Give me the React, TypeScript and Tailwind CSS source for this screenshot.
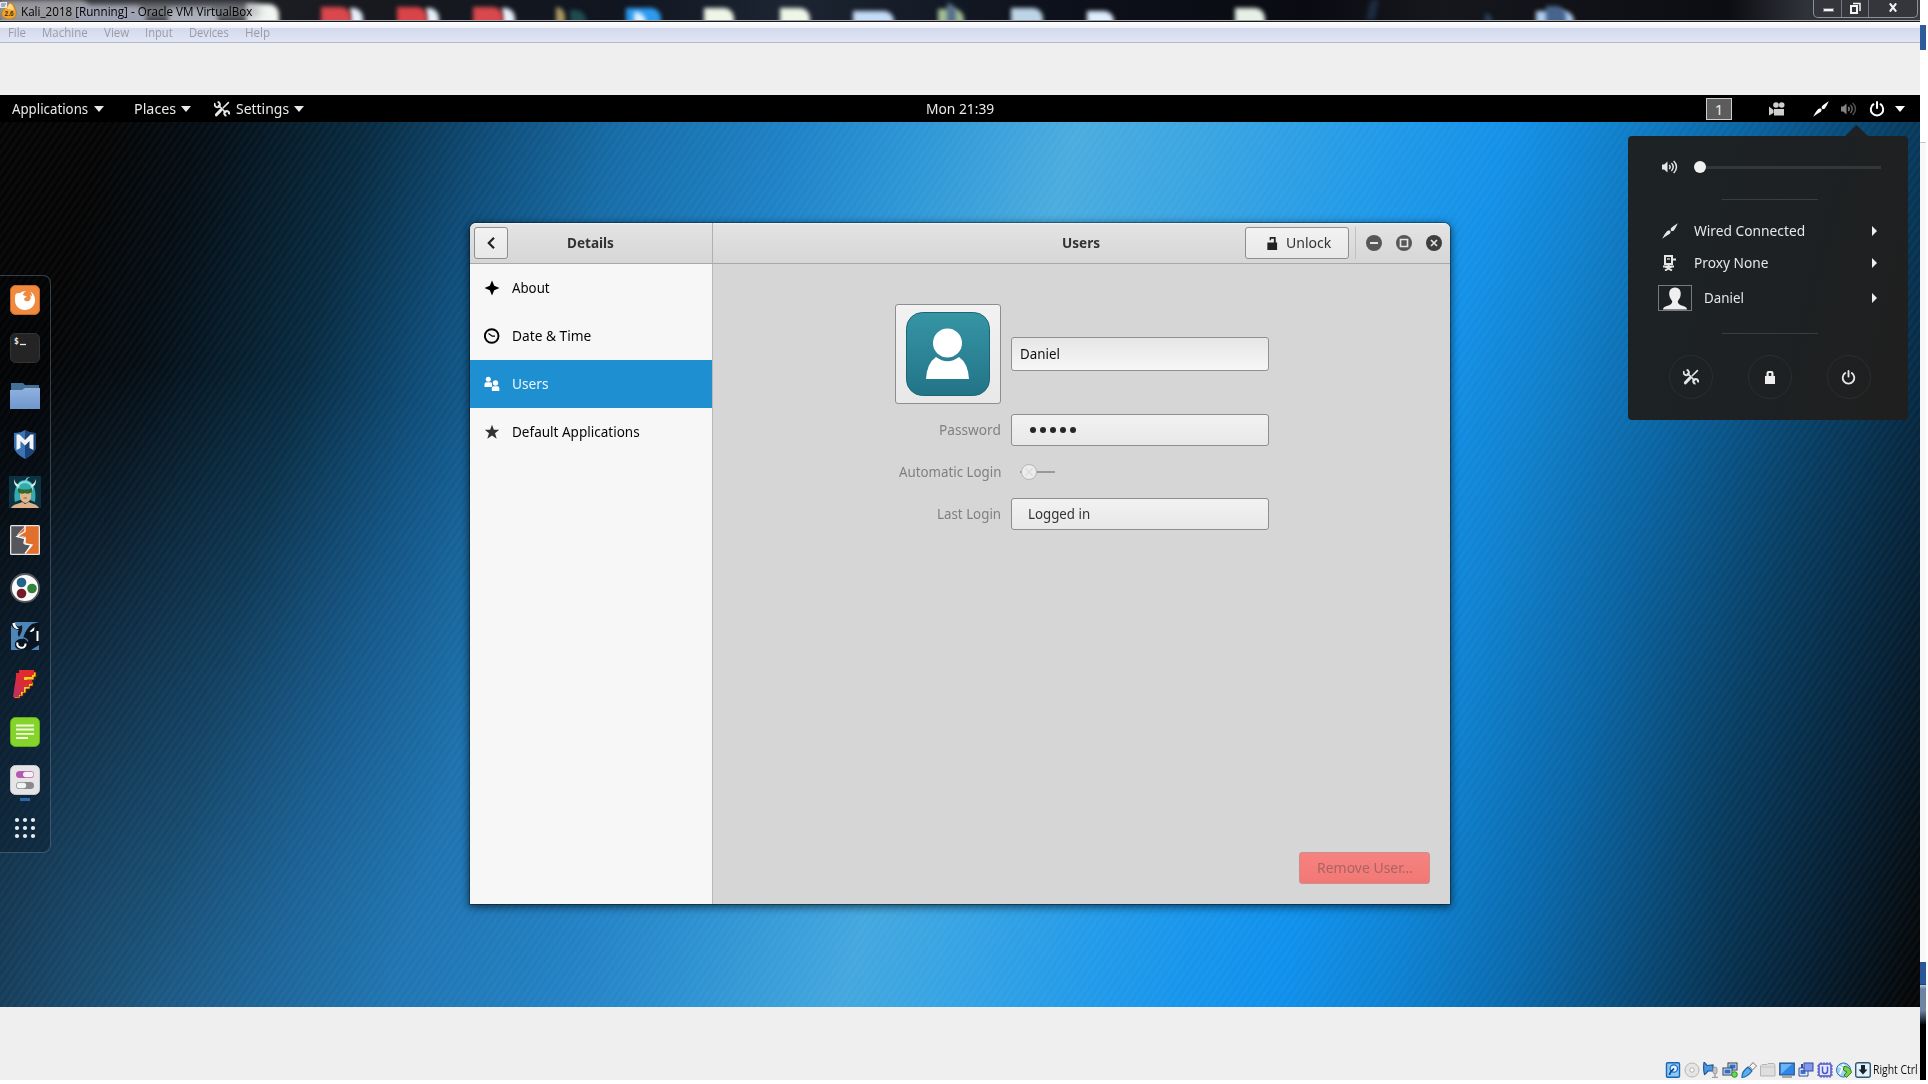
import { useLayoutEffect, useRef, type ReactNode } from "react";

/* A single line of text, condensed or widened to a given pixel width. */
function Fit({ w, className = "", children }: { w: number; className?: string; children: ReactNode }) {
  const ref = useRef<HTMLSpanElement>(null);
  useLayoutEffect(() => {
    const el = ref.current;
    if (!el) return;
    el.style.transform = `scaleX(${w / el.offsetWidth})`;
  }, [w]);
  return (
    <span className="-mt-[2px] block shrink-0" style={{ width: w }}>
      <span ref={ref} className={`inline-block origin-left whitespace-nowrap ${className}`}>
        {children}
      </span>
    </span>
  );
}

function Tools({ className }: { className: string }) {
  return (
    <svg viewBox="0 0 16 16" className={className} fill="none" stroke="currentColor">
      <path d="M4.2 4.2 12 12" strokeWidth="1.7" />
      <path d="M1.1 2.3a2.6 2.6 0 0 0 4.3 2.9A2.6 2.6 0 0 0 3.6 1" strokeWidth="1.8" />
      <path d="M14.9 13.3a2.5 2.5 0 0 0-3.6-3 2.5 2.5 0 0 0 1.2 4.5" strokeWidth="2" />
      <path d="m14.4 1.6-5.2 5.2" strokeWidth="1.6" strokeLinecap="round" />
      <path d="m8.2 7.8-.8.8" strokeWidth="1.3" />
      <path d="M6.6 9.4 2.4 13.8" strokeWidth="3" strokeLinecap="round" />
    </svg>
  );
}

function Plug({ className }: { className: string }) {
  return (
    <svg viewBox="0 0 16 16" className={className} fill="currentColor">
      <path d="M15.8.2 11.6 2.9 8.9 5.2 8.7 7.3l1 .9 2-.4 2-3.2z" />
      <path d="M7.3 7.3 5.2 8 2.8 11 .1 15.8l4.4-3 3.3-2 1-2z" />
    </svg>
  );
}

function Speaker({ className, dim = false }: { className: string; dim?: boolean }) {
  return (
    <svg viewBox="0 0 16 16" className={className} fill="none" stroke="currentColor" strokeWidth="1.5">
      <path d="M0 5.5h2.2L5.5 2.4v11.2L2.2 10.5H0z" fill="currentColor" stroke="none" />
      <path d="M7.3 6c1.2 1.2 1.2 2.8 0 4" />
      <path d="M9.4 4c2.4 2.3 2.4 5.7 0 8" opacity={dim ? 0.75 : 1} />
      <path d="M11.7 2c3.7 3.7 3.7 8.3 0 12" opacity={dim ? 0.6 : 1} />
    </svg>
  );
}

function Power({ className }: { className: string }) {
  return (
    <svg viewBox="0 0 16 16" className={className} fill="none" stroke="currentColor" strokeWidth="2" strokeLinecap="round">
      <path d="M4.5 3.2a6.2 6.2 0 1 0 7 0" />
      <path d="M8 1v6" />
    </svg>
  );
}

function Caret({ className = "" }: { className?: string }) {
  return (
    <svg viewBox="0 0 10 6" className={`h-[6px] w-[10px] shrink-0 ${className}`} fill="currentColor">
      <path d="M0 0h10L5 6z" />
    </svg>
  );
}

const blobs = [
  { x: 0, w: 90, c: "#8b8a90", y: 0 },
  { x: 76, w: 70, c: "#9aa0c0", y: 6 },
  { x: 168, w: 50, c: "#b0b8c8", y: 8 },
  { x: 246, w: 33, c: "#f2f6f2", y: 4 },
  { x: 350, w: 13, c: "#e6effa", y: 8 },
  { x: 321, w: 30, c: "#d8484c", y: 7 },
  { x: 426, w: 13, c: "#e6effa", y: 8 },
  { x: 397, w: 30, c: "#d84448", y: 7 },
  { x: 502, w: 13, c: "#e6effa", y: 8 },
  { x: 473, w: 30, c: "#d8484c", y: 7 },
  { x: 556, w: 9, c: "#a8985e", y: 7 },
  { x: 570, w: 16, c: "#1f4c50", y: 10 },
  { x: 626, w: 35, c: "#2d9cf0", y: 8 },
  { x: 634, w: 12, c: "#dff2ff", y: 12 },
  { x: 704, w: 30, c: "#eef6e8", y: 8 },
  { x: 780, w: 30, c: "#eef6e8", y: 8 },
  { x: 853, w: 41, c: "#c4dcf8", y: 11 },
  { x: 938, w: 26, c: "#a4be94", y: 9 },
  { x: 947, w: 9, c: "#56708c", y: 3 },
  { x: 1011, w: 32, c: "#bcd4e6", y: 8 },
  { x: 1087, w: 27, c: "#deeefc", y: 11 },
  { x: 1235, w: 30, c: "#e6f0e6", y: 8 },
  { x: 1485, w: 7, c: "#28405a", y: 13 },
  { x: 1536, w: 38, c: "#b0cdf2", y: 11 },
  { x: 1546, w: 20, c: "#46648c", y: 6 },
];

function TitleBar() {
  return (
    <div className="relative h-[20px] shrink-0 overflow-hidden bg-[linear-gradient(90deg,#24262b_0,#17191f_20%,#101520_32%,#1c2532_41%,#0d111b_55%,#0a0b12_68%,#15171c_75%,#0c0d12_90%,#30323a_94%,#3a3c42_100%)]">
      {blobs.map((b, i) => (
        <i
          key={i}
          className="absolute h-[28px] rounded-tr-[10px] blur-[2px]"
          style={{ left: b.x, width: b.w, top: b.y, background: b.c }}
        />
      ))}
      <i className="absolute -left-3 top-[3px] h-[16px] w-[272px] rounded-full bg-[#a3a4a8]/70 blur-[5px]" />
      <i className="absolute left-[1368px] top-0 h-[20px] w-[9px] -skew-x-12 bg-[#21364f] opacity-70 blur-[2px]" />
      <div className="relative flex h-[20px] items-center">
        <svg viewBox="0 0 17 18" className="h-[18px] w-[17px] shrink-0">
          <path d="M5 7 10 2c3-1 4 3 6 8 1 6-2 8-7 8-6 0-8-4-7-7z" fill="#f0a52c" stroke="#a56a12" strokeWidth=".6" />
          <path d="M9 3c2-1 4 2 5 6L7 8z" fill="#ffd98a" />
          <rect width="7" height="6" y="1" fill="#e8ecf2" />
          <path d="M1 3h5M1 5h4" stroke="#5c6d8c" />
          <text x="4.6" y="14.5" fontSize="6.5" fontWeight="700" fontFamily="Liberation Sans" fill="#4a2c05">2.6</text>
        </svg>
        <div className="ml-[4px] mt-[6px] font-['Open_Sans'] text-[12.5px] leading-[18px] text-black">
          <Fit w={231}>Kali_2018 [Running] - Oracle VM VirtualBox</Fit>
        </div>
        <div className="ml-auto mr-[2px] flex h-[18px] w-[105px] self-start rounded-b-[5px] border border-t-0 border-[#8f9197] bg-[#34363c] text-white">
          <div className="flex w-[28px] items-center justify-center border-r border-[#77797f]">
            <i className="ml-[2px] mt-[3px] h-[4px] w-[11px] border border-[#777] bg-[#f4f4f4]" />
          </div>
          <div className="flex w-[27px] items-center justify-center border-r border-[#77797f]">
            <svg viewBox="0 0 12 12" className="mt-[-2px] size-[12px]" fill="none" stroke="#f4f4f4" strokeWidth="2">
              <path d="M4 1.5h7V9" strokeWidth="1.5" />
              <path d="M2 4h6v7H2z" />
            </svg>
          </div>
          <div className="flex flex-1 items-center justify-center">
            <svg viewBox="0 0 10 10" className="mt-[-2px] h-[9px] w-[10px]" fill="none" stroke="#f4f4f4" strokeWidth="2.4">
              <path d="m1.5.5 7 9M8.500.5l-7 9" />
            </svg>
          </div>
        </div>
      </div>
    </div>
  );
}

function MenuBar() {
  return (
    <>
      <div className="h-px shrink-0 bg-[#a9aab0]" />
      <div className="h-px shrink-0 bg-[#17171c]" />
      <div className="flex h-[21px] shrink-0 gap-[16px] border-b border-[#b3b9c9] bg-[linear-gradient(180deg,#fff_0,#eef1f8_30%,#d3d9ec_31%,#e2e6f6_100%)] pl-[8px] font-['Open_Sans'] text-[12px] leading-[26px] text-[#9b9ca3]">
        <Fit w={18}>File</Fit>
        <Fit w={46}>Machine</Fit>
        <Fit w={25}>View</Fit>
        <Fit w={28}>Input</Fit>
        <Fit w={40}>Devices</Fit>
        <Fit w={25}>Help</Fit>
      </div>
    </>
  );
}

function TopBar() {
  return (
    <div className="flex h-[27px] shrink-0 items-center bg-black text-[15px] leading-[26px] text-[#e9e9e9]">
      <div className="flex w-[914px] items-center pl-[12px]">
        <Fit w={76}>Applications</Fit>
        <Caret className="ml-[6px]" />
        <div className="ml-[30px]"><Fit w={42}>Places</Fit></div>
        <Caret className="ml-[5px]" />
        <Tools className="ml-[23px] mr-[6px] size-[16px]" />
        <Fit w={53}>Settings</Fit>
        <Caret className="ml-[5px]" />
      </div>
      <div className="ml-[12px]"><Fit w={68}>Mon 21:39</Fit></div>
      <div className="ml-auto flex items-center pr-[15px]">
        <div className="mr-[37px] flex h-[22px] w-[26px] items-center justify-center border border-[#cfcfcf] bg-[#5c5c5c] text-[15px]">1</div>
        <svg viewBox="0 0 16 14" className="mr-[28px] h-[14px] w-[16px]" fill="#cfcfcf">
          <circle cx="7" cy="3" r="2.8" />
          <circle cx="12.700" cy="3" r="2.800" />
          <path d="M5 7h10v6.500H5zM0 4.500 4.500 8v3L0 13.500z" />
        </svg>
        <Plug className="mr-[12px] size-[16px] text-white" />
        <Speaker className="mr-[12px] size-[16px] text-[#858585]" dim />
        <Power className="mr-[10px] size-[16px] text-white" />
        <Caret className="text-white" />
      </div>
    </div>
  );
}

const dockIcons: ReactNode[] = [
  <svg viewBox="0 0 30 30" className="size-[30px]">
    <rect width="30" height="30" rx="6" fill="#f08a3e" />
    <rect x=".5" y=".5" width="29" height="29" rx="5.500" fill="none" stroke="#c9682a" />
    <path d="M5.300 10C6 8 8 7.500 10 8.200c1.500-1.700 4-2.500 6-1.700-2 .5-3 2-3 3.500 1 1 2.500.8 3.500 1-.3 1.500-2.200 2-2.500 3 .5 2.500 3.500 3 5.500 1.500 1.500-1.500 1.500-4 .5-5.500 1 .2 1.800 1 2 1.800.2-2-.5-4-2-5.300 3.500 1.500 5.300 5 5 9.500-.5 5-4.500 9-10 9s-10-4-10-9.500c0-2 .0-4 .3-5.500z" fill="#fff" />
  </svg>,
  <svg viewBox="0 0 30 30" className="size-[30px]">
    <rect x=".5" y=".5" width="29" height="29" rx="5" fill="#242424" stroke="#343434" />
    <text x="4" y="10.500" fontFamily="DejaVu Sans Mono" fontSize="8" fontWeight="700" fill="#e8e8e8">$</text>
    <path d="M10 11.500h6" stroke="#e8e8e8" strokeWidth="1.300" />
  </svg>,
  <svg viewBox="0 0 30 30" className="size-[30px]">
    <defs><linearGradient id="fold" x1="0" y1="0" x2="0" y2="1"><stop stopColor="#8fb1de" /><stop offset="1" stopColor="#6f97cd" /></linearGradient></defs>
    <path d="M1 2h12l2 2h14v8H1z" fill="#456f96" />
    <path d="M0 9h12l3-2h15v21H0z" fill="url(#fold)" />
  </svg>,
  <svg viewBox="0 0 30 30" className="size-[30px]">
    <path d="M4 4c5 0 8-1 11-3 3 2 6 3 11 3v13c0 6-6 10-11 13C10 27 4 23 4 17z" fill="#3a74b4" />
    <path d="M15 1c3 2 6 3 11 3v13c0 6-6 10-11 13z" fill="#1d4478" />
    <path d="M6.500 21V5.500h3L15 11l5.500-5.500h3V21l-4-2v-7L15 16.500 10.500 12v7z" fill="#f2f4f7" />
  </svg>,
  <svg viewBox="0 0 32 32" className="size-[32px]">
    <rect width="32" height="32" fill="#0c3342" />
    <path d="M6 26C4 16 7 4 16 4s12 12 10 22l-5-2H11z" fill="#35a9ae" />
    <path d="M9 13C9 8 12 6 16 6s8 3 7 8" stroke="#86dcda" strokeWidth="2" fill="none" />
    <path d="M16 5c1-4 4-4 5-4-2 1-3 2-3 4z" fill="#65c8c4" />
    <path d="M5 3c0 5 1 7 4 8l1-2C7 8 6 6 5 3zM27 3c0 5-1 7-4 8l-1-2c3-1 4-3 5-6z" fill="#d9efe6" />
    <path d="M11 15h11v5c0 4-3 7-5.500 7S11 24 11 20z" fill="#e2b68d" />
    <path d="M9 12c4 2 10 2 14 0v4c-3 2-5 2-7 1-2 1-5 1-7-1z" fill="#2c6a30" />
    <path d="M2 32c2-4 8-4 11-6l3 2 4-2c3 2 8 2 10 6z" fill="#e0b088" />
    <path d="M14.500 22h3.500" stroke="#a94f49" />
  </svg>,
  <svg viewBox="0 0 30 30" className="size-[30px]">
    <rect width="30" height="30" rx="1.500" fill="#e8e5e0" />
    <path d="M1.300 1.300h13.500L7 10l7.500 2.500-1.500 6L20 20l-5 8.700H1.300z" fill="#55575d" />
    <path d="M15.500 1.300h13.200v27.400H15L22 20l-7.500-2 1.500-6-8-2z" fill="#e1702c" />
    <path d="M15 1v5.500L7 11.500l8 2V19l7 1-7 8.500" fill="none" stroke="#fff" strokeWidth="1.300" />
  </svg>,
  <svg viewBox="0 0 30 30" className="size-[30px]">
    <circle cx="15" cy="15" r="14" fill="#fafafa" stroke="#55595c" strokeWidth="1.800" />
    <circle cx="11.500" cy="9.500" r="4.800" fill="#236487" />
    <circle cx="22" cy="15.500" r="4.800" fill="#32823a" />
    <circle cx="11.500" cy="20.500" r="4.800" fill="#731b29" />
  </svg>,
  <svg viewBox="0 0 30 30" className="size-[30px]">
    <rect x="1" y="1" width="28" height="28" fill="#4f86b8" />
    <path d="M1 1h3c2 4 4 6 8 3 1 4-1 9-3 12-2-3-1-6 0-7-4 0-7-3-8-5z" fill="#0d1824" />
    <path d="M22 3c2-1 5-1 7-2v23l-8 5h-9c-5 0-8-3-7-7 1-3 5-5 8-4 1-5 4-11 9-15z" fill="#0a1420" />
    <path d="M2.500 2c0 4 3 6.500 6.500 6-.5-1-3-1.500-4-6z" fill="#fff" />
    <path d="m19.500 10.500 5-4.500-.5 3.500-2.500 1.500z" fill="#fff" />
    <path d="M26.500 10h2v10h-2z" fill="#fff" />
    <path d="M7.500 21.500c-2 6 8.500 7.500 8 1" fill="none" stroke="#fff" strokeWidth="2" />
    <path d="M9 17.500c4-2 8 0 9 3" fill="none" stroke="#4f86b8" strokeWidth="1.200" />
  </svg>,
  <svg viewBox="0 0 30 30" className="size-[30px]">
    <defs><linearGradient id="eff" x1="1" y1="0" x2="0" y2="1"><stop stopColor="#e52a22" /><stop offset=".5" stopColor="#dc2b38" /><stop offset="1" stopColor="#b8326c" /></linearGradient></defs>
    <path d="M10 3h16v5h-2v3h-7v2h6v4h-3v3h-4v4h-3v3h-3v2H4l3-14z" fill="#f8d21a" stroke="#7a1a14" strokeWidth=".8" />
    <path d="M9 1h15v5h-2v2h-8v3h8v4h-3v3h-5v5h-3v3H9v2H3L6 8V4h3z" fill="url(#eff)" />
  </svg>,
  <svg viewBox="0 0 30 30" className="size-[30px]">
    <rect x=".5" y=".5" width="29" height="29" rx="5" fill="#85d42c" stroke="#62ac18" />
    <path d="M6 8.500h18M6 12.500h18M6 16.800h18M6 21h12" stroke="#f2fadf" strokeWidth="1.800" />
  </svg>,
  <svg viewBox="0 0 30 30" className="size-[30px]">
    <rect x=".5" y=".5" width="29" height="29" rx="5" fill="#e5e5e8" stroke="#c8c8cc" />
    <rect x="6" y="6" width="18" height="7" rx="3.500" fill="#b659af" />
    <rect x="13" y="6.800" width="10.500" height="5.400" rx="2.700" fill="#f4f0f4" />
    <rect x="6" y="17" width="18" height="7" rx="3.500" fill="#8a8a8a" />
    <rect x="6.700" y="17.800" width="9.500" height="5.400" rx="2.700" fill="#f3f3f3" />
  </svg>,
  <svg viewBox="0 0 30 30" className="size-[30px]" fill="#e9edf0">
    {[7, 15, 23].map((y) => [7, 15, 23].map((x) => <circle key={`${x}${y}`} cx={x} cy={y} r="2.100" />))}
  </svg>,
];

function Dock() {
  return (
    <div className="absolute left-0 top-[153px] h-[578px] w-[51px] rounded-r-[8px] border border-l-0 border-[#7e97a8]/40 bg-[#00060c]/25">
      {dockIcons.map((icon, i) => (
        <div key={i} className="relative flex h-[48px] items-center justify-center">
          {icon}
          {i === 10 && <i className="absolute bottom-[3px] left-[20px] h-[3px] w-[10px] bg-[#2d68a8]" />}
        </div>
      ))}
    </div>
  );
}

const items = [
  { label: "About", w: 38, icon: <path d="M8 .5 10.200 5.800 15.500 8l-5.300 2.200L8 15.500l-2.200-5.300L.5 8l5.300-2.200z" fill="#000" /> },
  {
    label: "Date & Time",
    w: 79.5,
    icon: (
      <g fill="none" stroke="#000">
        <circle cx="7.700" cy="8" r="6.800" strokeWidth="1.900" />
        <path d="m4.500 5.500 3.700 2.700H11" strokeWidth="1.200" />
      </g>
    ),
  },
  {
    label: "Users",
    w: 36.5,
    icon: (
      <g fill="#fff">
        <circle cx="4.300" cy="3.200" r="2.500" />
        <path d="M.5 11V8q0-1.800 2-1.800h4Q8 6.500 8 8v3z" />
        <circle cx="11.500" cy="7" r="2.700" />
        <path d="M7.800 15v-3q0-1.800 2-1.800h3.700q1.800 0 1.800 1.800v3z" />
      </g>
    ),
  },
  { label: "Default Applications", w: 128, icon: <path d="m8 .8 1.900 5h5.300L11 9.200l1.700 5.600L8 11.500l-4.700 3.300L5 9.200.8 5.800h5.300z" fill="#333" /> },
];

const raised = "rounded-[3px] border border-[#8e8e8e] bg-[linear-gradient(180deg,#f2f2f2,#e8e8e8)]";

function DetailsWindow() {
  return (
    <div className="absolute left-[470px] top-[101px] flex h-[681px] w-[980px] flex-col overflow-hidden rounded-t-[6px] bg-[#d6d6d6] text-[15px] leading-[20px] shadow-[0_2px_8px_1px_rgba(0,0,0,0.6),0_0_0_1px_rgba(0,30,50,0.4)]">
      <div className="flex h-[41px] shrink-0 border-b border-[#a9a9a9] bg-[linear-gradient(180deg,#f6f6f6_0,#e3e3e3_2px,#d6d6d6_100%)] font-bold text-[#333]">
        <div className="flex w-[243px] items-center border-r border-[#b0b0b0] pl-[4px]">
          <div className={`flex h-[32px] w-[34px] items-center justify-center ${raised}`}>
            <svg viewBox="0 0 8 12" className="h-[12px] w-[8px]" fill="none" stroke="#222" strokeWidth="2.200">
              <path d="M7 .8 1.800 6 7 11.200" />
            </svg>
          </div>
          <div className="ml-[59px]"><Fit w={47}>Details</Fit></div>
        </div>
        <div className="flex flex-1 items-center justify-end">
          <div className="mr-[145px]"><Fit w={38}>Users</Fit></div>
          <div className={`flex h-[32px] w-[104px] items-center pl-[20px] font-normal ${raised}`}>
            <svg viewBox="0 0 12 14" className="mr-[8px] h-[13px] w-[12px]" fill="#222">
              <path d="M1 6h10.500v8H1zM3.500 0H10v6H8V2H5v1.500H3.500z" />
            </svg>
            <Fit w={45}>Unlock</Fit>
          </div>
          <i className="ml-[6px] h-[32px] w-px bg-[#c0c0c0]" />
          <svg viewBox="0 0 94 18" className="h-[18px] w-[94px]" fill="none" stroke="#e4e4e4">
            <circle cx="18" cy="9" r="8" fill="#575757" stroke="none" />
            <path d="M14 9h8" strokeWidth="2" />
            <circle cx="48" cy="9" r="8" fill="#575757" stroke="none" />
            <path d="M44.500 5.500h7v7h-7z" strokeWidth="1.700" />
            <circle cx="78" cy="9" r="8" fill="#3e3e3e" stroke="none" />
            <path d="m75 6 6 6m0-6-6 6" strokeWidth="1.700" />
          </svg>
        </div>
      </div>
      <div className="flex flex-1">
        <div className="w-[243px] border-r border-[#b8b8b8] bg-[#f7f7f7]">
          {items.map((it) => (
            <div key={it.label} className={it.label === "Users" ? "flex h-[48px] items-center bg-[#1e8fd0] pl-[14px] text-[#eef7fc]" : "flex h-[48px] items-center pl-[14px] text-[#050505]"}>
              <svg viewBox="0 0 16 16" className="mr-[12px] size-[16px]">{it.icon}</svg>
              <Fit w={it.w}>{it.label}</Fit>
            </div>
          ))}
        </div>
        <div className="flex flex-1 flex-col items-end pt-[40px]">
          <div className="mr-[181px] grid w-[374px] grid-cols-[106px_258px] items-center gap-x-[10px] text-[#7f8080]">
            <div className={`flex h-[100px] items-center justify-center ${raised}`}>
              <svg viewBox="0 0 84 84" className="mr-[1px] size-[84px]">
                <defs><linearGradient id="teal" x1="0" y1="0" x2="0" y2="1"><stop stopColor="#3695a5" /><stop offset="1" stopColor="#227487" /></linearGradient></defs>
                <rect x=".5" y=".5" width="83" height="83" rx="16" fill="url(#teal)" stroke="#1e6474" />
                <ellipse cx="41.500" cy="31" rx="14.500" ry="14.500" fill="#fff" />
                <path d="M30 45q11.500 8.500 23 0 9 6 10 22H20q1-16 10-22z" fill="#fff" />
              </svg>
            </div>
            <div className="flex h-[34px] items-center rounded-[3px] border border-[#919191] bg-[linear-gradient(180deg,#e6e6e6,#f6f6f6)] pl-[8px] text-[#101010]"><Fit w={40}>Daniel</Fit></div>
            <div className="mt-[10px] flex justify-end"><Fit w={62}>Password</Fit></div>
            <div className={`mt-[10px] flex h-[32px] items-center gap-[4px] pl-[18px] ${raised}`}>
              {[0, 1, 2, 3, 4].map((d) => <i key={d} className="size-[6px] rounded-full bg-[#272727]" />)}
            </div>
            <div className="flex h-[52px] items-center justify-end"><Fit w={102}>Automatic Login</Fit></div>
            <svg viewBox="0 0 38 18" className="ml-[8px] h-[18px] w-[38px]">
              <path d="M1 9h35" stroke="#9a9a9a" strokeWidth="2" />
              <circle cx="10" cy="9" r="7.500" fill="#ececec" stroke="#b5b5b5" />
              <path d="m6.500 5.500 7 7m0-7-7 7" stroke="#dcdcdc" strokeWidth="1.500" />
            </svg>
            <div className="flex justify-end"><Fit w={64}>Last Login</Fit></div>
            <div className={`flex h-[32px] items-center pl-[16px] text-[#333] ${raised}`}><Fit w={62}>Logged in</Fit></div>
          </div>
          <div className="mb-[20px] mr-[20px] mt-auto flex h-[32px] w-[131px] items-center justify-center rounded-[3px] border border-[#c98f8c] bg-[linear-gradient(180deg,#f6827f,#f27875)] text-[#a86563]">
            <Fit w={96}>Remove User...</Fit>
          </div>
        </div>
      </div>
    </div>
  );
}

function Arrow() {
  return (
    <svg viewBox="0 0 5 10" className="ml-auto h-[10px] w-[5px]" fill="#eee"><path d="M0 0v10l5-5z" /></svg>
  );
}

function SystemMenu() {
  return (
    <div className="absolute left-[1628px] top-[3px] w-[280px] text-[15px] leading-[20px] text-[#e6e6e6]">
      <svg viewBox="0 0 25 12" className="ml-[216px] block h-[11px] w-[25px]" fill="#1e2225"><path d="M0 12 12.500 0 25 12z" /></svg>
      <div className="flex h-[284px] flex-col rounded-[4px] bg-[linear-gradient(105deg,#1d2225,#1d2123_55%,#201f1f)]">
        <div className="mt-[21px] flex h-[20px] items-center pl-[34px] pr-[27px]">
          <Speaker className="mr-[16px] size-[16px]" />
          <i className="size-[12px] rounded-full bg-[#f0f0f0]" />
          <i className="h-[3px] flex-1 bg-[#343737]" />
        </div>
        <i className="ml-[94px] mt-[22px] h-px w-[96px] bg-[#383d3f]" />
        <div className="mt-[21px] flex h-[20px] items-center pl-[34px] pr-[31px]">
          <Plug className="mr-[16px] size-[16px]" />
          <Fit w={111}>Wired Connected</Fit>
          <Arrow />
        </div>
        <div className="mt-[12px] flex h-[20px] items-center pl-[34px] pr-[31px]">
          <svg viewBox="0 0 16 16" className="mr-[16px] size-[16px]" fill="none" stroke="currentColor" strokeWidth="2">
            <path d="M3 1h7v8H3zM10 4.500h4M6.500 9v3M1 11.500h11M3 15.500l7-4M3 11.500l7 4" />
            <path d="M5 4h3" strokeWidth="1.300" />
          </svg>
          <Fit w={74}>Proxy None</Fit>
          <Arrow />
        </div>
        <div className="mt-[12px] flex h-[26px] items-center pl-[30px] pr-[31px]">
          <div className="mr-[12px] flex h-[26px] w-[34px] items-end justify-center border border-[#777a7b]">
            <svg viewBox="0 0 26 24" className="h-[23px] w-[24px]" fill="#efefef">
              <path d="M13 0c5 0 7 4 6 9-.5 3-2 4-3 6 0 3 2 4 6 5 3 1 4 2 4 4H0c0-2 1-3 4-4 4-1 6-2 6-5-1-2-2.500-3-3-6-1-5 1-9 6-9z" />
            </svg>
          </div>
          <Fit w={40}>Daniel</Fit>
          <Arrow />
        </div>
        <i className="ml-[94px] mt-[22px] h-px w-[96px] bg-[#383d3f]" />
        <div className="ml-[3px] mt-[21px] flex justify-center gap-[35px]">
          <div className="flex size-[44px] items-center justify-center rounded-full border border-[#2a2e30]"><Tools className="size-[16px]" /></div>
          <div className="flex size-[44px] items-center justify-center rounded-full border border-[#2a2e30]">
            <svg viewBox="0 0 10 13" className="h-[13px] w-[10px]" fill="#eee"><path d="M0 5h1.500V2q0-2 2-2h3q2 0 2 2v3H10v8H0zM3.700 5h2.600V2H3.700z" /></svg>
          </div>
          <div className="flex size-[44px] items-center justify-center rounded-full border border-[#2a2e30]"><Power className="size-[15px]" /></div>
        </div>
      </div>
    </div>
  );
}

const status: ReactNode[] = [
  <g><rect x="1.500" y=".7" width="13" height="14.600" rx="1.200" fill="#8cc8f4" stroke="#1667b8" strokeWidth="1.400" /><circle cx="8.800" cy="6.500" r="3.700" fill="#e2f3ff" stroke="#1667b8" strokeWidth="1.200" /><path d="M4.500 13c0-3 2-3.500 4.500-6.500" stroke="#0d4b94" strokeWidth="1.800" fill="none" /></g>,
  <g><circle cx="8" cy="8" r="7" fill="#e6e6e6" stroke="#b5b5b5" /><circle cx="8" cy="8" r="2.200" fill="#fff" stroke="#b0b0b0" /></g>,
  <g><path d="M1 .5c1.500 0 2 2 3 3l6-.5v6L5 9c-1 1-2 3-3.500 3.500C.5 9 .5 4 1 .5z" fill="#4a98df" stroke="#1c5699" strokeWidth="1.200" /><rect x="10" y="5" width="4" height="7" rx="2" fill="#c6c6c6" stroke="#8c8c8c" strokeWidth=".8" /><path d="M12 12v3.500M9 15.500h6" stroke="#a2a2a2" strokeWidth="1.500" /></g>,
  <g stroke="#333b4a"><rect x="6" y="1" width="9" height="7" fill="#e3edf8" /><rect x="7.500" y="2.500" width="6" height="4" fill="#2870cb" stroke="none" /><rect x="1" y="6" width="9" height="7" fill="#e3edf8" /><rect x="2.500" y="7.500" width="6" height="4" fill="#2870cb" stroke="none" /><circle cx="12.500" cy="12.500" r="2.800" fill="#6fd45e" stroke="#2a8d20" /></g>,
  <g><path d="M1 15.300c0-4 1-6.300 6-10.300l4 4c-3 4-6 6.300-10 6.300z" fill="#5aaef0" stroke="#1d64ab" strokeWidth="1.200" /><path d="m8.500 4.500 3.500-4 3.500 3.500-4 4z" fill="#f4f4f4" stroke="#777" /></g>,
  <g><path d="M.5 14V4L2 2.500h5l1-1h6l1 2V14z" fill="#dedede" stroke="#b5b5b5" /><path d="M1 5h14" stroke="#c4c4c4" /></g>,
  <g><rect x=".7" y="1" width="14.600" height="12" fill="#2f86e6" stroke="#244b7c" /><path d="M2 12V2h11z" fill="#6ab5f8" /><path d="M3 15h10" stroke="#8e8e8e" strokeWidth="1.500" /></g>,
  <g stroke="#334ba0"><path d="M1 6h9v8H1z" fill="#e6eefb" /><path d="M2.500 8h5v4h-5z" fill="#3c6fcf" stroke="none" /><rect x="6" y="1" width="9" height="8" fill="#8497ee" /><path d="M4 6V2" strokeWidth="2" /></g>,
  <g><rect x="2" y="2" width="12" height="12" rx="1" fill="#e5e8fd" stroke="#4a56c8" strokeWidth="1.500" /><path d="M4 0v2m3-2v2m3-2v2m3-2v2M4 14v2m3-2v2m3-2v2m3-2v2M0 4h2M0 7h2m-2 3h2m-2 3h2m12-9h2m-2 3h2m-2 3h2m-2 3h2" stroke="#4a56c8" /><path d="M5.500 4.500V9q0 2.500 2.500 2.500T10.500 9V4.500" fill="none" stroke="#4a56c8" strokeWidth="1.500" /></g>,
  <g><circle cx="7.500" cy="8" r="7" fill="#9fd2f0" stroke="#2b76ad" /><path d="M2.500 5C6 4 7 7 5 9l-1 3M6 2.500 9 4" stroke="#fff" strokeWidth="1.600" fill="none" /><path d="M8 4.500c3-.5 7 2 7.500 6l-5 5-2.500-2.500L11 10 7.500 8z" fill="#7ad046" stroke="#2f7d1c" /></g>,
  <g><rect x=".7" y=".7" width="14.600" height="14.600" rx="2" fill="#e5f1fb" stroke="#2f5878" strokeWidth="1.400" /><path d="M6 3h4v4.500h2.500L8 12.500 3.500 7.500H6z" fill="#16222c" /></g>,
];

function StatusBar() {
  return (
    <div className="flex h-[73px] shrink-0 items-end justify-end bg-[#efefef] pb-[2px] pr-[2px]">
      <div className="flex items-center gap-[3px]">
        {status.map((s, i) => <svg key={i} viewBox="0 0 16 16" className="size-[16px]">{s}</svg>)}
        <div className="ml-[-1px] mt-[2px] font-['Open_Sans'] text-[12.5px] leading-[16px] text-[#111]"><Fit w={45}>Right Ctrl</Fit></div>
      </div>
    </div>
  );
}

export default function App() {
  return (
    <div className="flex h-[1084px] w-[1928px] overflow-hidden bg-white font-['Noto_Sans',sans-serif]">
      <div className="flex h-[1080px] w-[1920px] shrink-0 flex-col bg-[#efefef]">
        <TitleBar />
        <MenuBar />
        <div className="h-[52px] shrink-0" />
        <TopBar />
        <div className="relative h-[885px] shrink-0 overflow-hidden bg-[linear-gradient(105deg,#000_5%,#000a12_10%,#03263c_17%,#0a4a78_23%,#126aa6_29%,#1a80c6_37%,#2a95d6_43%,#47abde_50%,#34a2e2_57%,#1b97e8_65%,#0f8fe8_70%,#0b7dca_75%,#05609f_81%,#033a60_88%,#01182a_95%,#000203_99.5%)]">
          <i className="absolute inset-0 bg-[radial-gradient(ellipse_800px_640px_at_8%_100%,rgba(50,140,205,0.42),rgba(45,125,190,0.26)_50%,transparent)]" />
          <i className="absolute inset-0 bg-[radial-gradient(ellipse_500px_700px_at_64%_100%,rgba(0,140,245,0.3),transparent)]" />
          <i className="absolute inset-0 bg-[repeating-linear-gradient(125deg,rgba(255,255,255,0.05)_0,rgba(255,255,255,0.01)_3px,rgba(255,255,255,0.05)_6px)]" />
          <Dock />
          <DetailsWindow />
          <SystemMenu />
        </div>
        <StatusBar />
      </div>
      <div className="flex w-[6px] flex-col">
        <i className="h-[25px] bg-white" />
        <i className="h-[25px] bg-[#2f5b9c]" />
        <i className="h-[92px] bg-white" />
        <i className="h-px bg-[#c8c8c8]" />
        <i className="h-[819px] bg-[#f8f8f8]" />
        <i className="h-[22px] bg-[#2b579a]" />
        <i className="h-px bg-[#20406c]" />
        <i className="h-[39px] bg-[linear-gradient(180deg,#b9c6d8,#6c83a2_10%,#7186a3_65%,#05090f)]" />
        <i className="h-[56px] bg-black" />
      </div>
    </div>
  );
}
